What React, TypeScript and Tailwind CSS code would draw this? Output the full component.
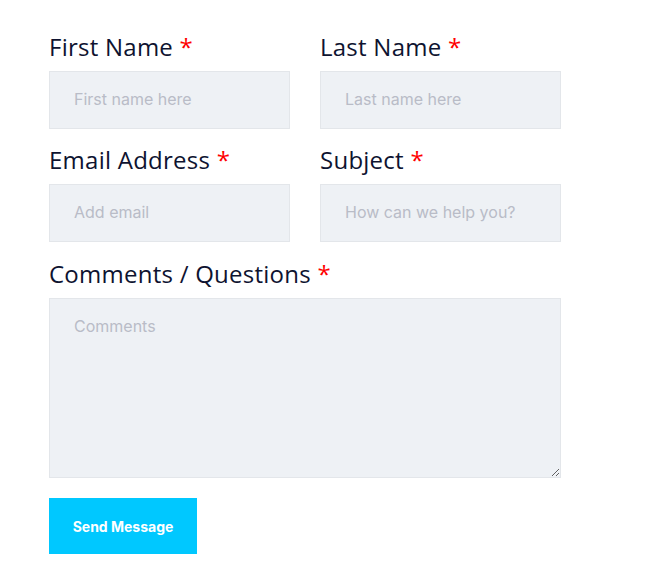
import React from "react";

const labelCls = "block text-[24px] leading-[36px] font-medium text-[#0e1330] mb-[6px] tracking-[0.25px]";
const fieldCls =
    "w-full bg-[#eef1f5] border border-[#e3e6ea] px-[24px] text-[16px] text-[#333] placeholder:text-[#b9bcc7] outline-none";

function Label({ text }: { text: string }) {
    return (
        <label className={labelCls} style={{ fontFamily: "'Open Sans', sans-serif" }}>
            {text} <span className="text-[#ff0000]">*</span>
        </label>
    );
}

export default function App() {
    return (
        <div className="min-h-screen bg-white pl-[49px] pt-[29px]" style={{ fontFamily: "Inter, sans-serif" }}>
            <form className="w-[512px]" onSubmit={(e) => e.preventDefault()}>
                <div className="grid grid-cols-2 gap-x-[30px]">
                    <div className="mb-[13px]">
                        <Label text="First Name" />
                        <input className={`${fieldCls} h-[58px] pb-[2px]`} placeholder="First name here" />
                    </div>
                    <div className="mb-[13px]">
                        <Label text="Last Name" />
                        <input className={`${fieldCls} h-[58px] pb-[2px]`} placeholder="Last name here" />
                    </div>
                    <div className="mb-[13px]">
                        <Label text="Email Address" />
                        <input className={`${fieldCls} h-[58px] pb-[2px]`} placeholder="Add email" />
                    </div>
                    <div className="mb-[14px]">
                        <Label text="Subject" />
                        <input className={`${fieldCls} h-[58px] pb-[2px]`} placeholder="How can we help you?" />
                    </div>
                </div>
                <div>
                    <Label text="Comments / Questions" />
                    <textarea className={`${fieldCls} block h-[180px] py-[15px]`} placeholder="Comments" />
                </div>
                <button
                    type="submit"
                    className="mt-[20px] w-[148px] h-[56px] bg-[#00c8ff] text-white text-[14px] font-bold"
                >
                    Send Message
                </button>
            </form>
        </div>
    );
}
